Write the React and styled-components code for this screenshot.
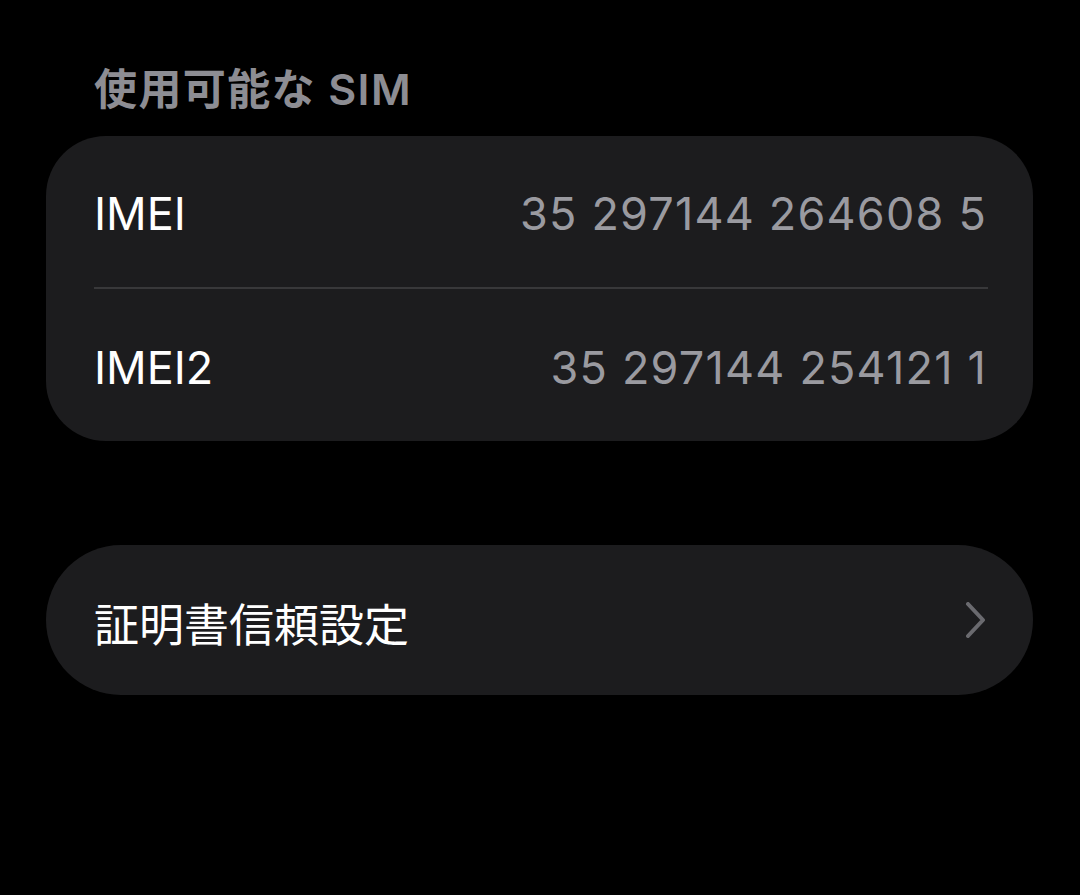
import React from 'react';
import styled, { createGlobalStyle } from 'styled-components';

const GlobalStyle = createGlobalStyle`
  html, body {
    margin: 0;
    padding: 0;
    background: #000;
  }
  body {
    font-family: Inter, "Noto Sans CJK JP", sans-serif;
    -webkit-font-smoothing: antialiased;
  }
`;

const Page = styled.div`
  width: 1080px;
  height: 895px;
  background: #000;
  padding: 58px 47px 0 46px;
  box-sizing: border-box;
  display: flex;
  flex-direction: column;
`;

const SectionTitle = styled.div`
  padding-left: 48px;
  font-size: 43px;
  font-weight: 600;
  color: #8d8d93;
  line-height: 62px;
  margin-bottom: 16px;
  letter-spacing: 1.4px;
`;

const Group = styled.div`
  background: #1c1c1e;
  border-radius: ${p => p.$radius || 60}px;
  overflow: hidden;
  margin-bottom: ${p => p.$gap || 0}px;
`;

const Row = styled.div`
  height: ${p => p.$height || 151}px;
  display: flex;
  align-items: center;
  justify-content: space-between;
  padding: 0 46px 0 48px;
  box-sizing: border-box;
`;

const Divider = styled.div`
  height: 2px;
  background: #38383a;
  margin: 0 45px 0 48px;
`;

const Label = styled.span`
  font-size: 45px;
  color: #fff;
  font-weight: 400;
  margin-top: 4px;
`;

const Value = styled.span`
  font-size: 45px;
  color: #9a9aa0;
  font-weight: 400;
  letter-spacing: 1.2px;
  margin-top: 4px;
`;

const Chevron = () => (
  <svg width="22" height="36" viewBox="0 0 22 36" fill="none">
    <path d="M3 2 L18 18 L3 34" stroke="#6a6a6f" strokeWidth="4" strokeLinecap="round" strokeLinejoin="round" />
  </svg>
);

export default function App() {
  return (
    <>
      <GlobalStyle />
      <Page>
        <SectionTitle>使用可能な SIM</SectionTitle>
        <Group $gap={104}>
          <Row>
            <Label>IMEI</Label>
            <Value>35 297144 264608 5</Value>
          </Row>
          <Divider />
          <Row $height={152}>
            <Label>IMEI2</Label>
            <Value>35 297144 254121 1</Value>
          </Row>
        </Group>
        <Group $radius={75}>
          <Row $height={150}>
            <Label>証明書信頼設定</Label>
            <Chevron />
          </Row>
        </Group>
      </Page>
    </>
  );
}
